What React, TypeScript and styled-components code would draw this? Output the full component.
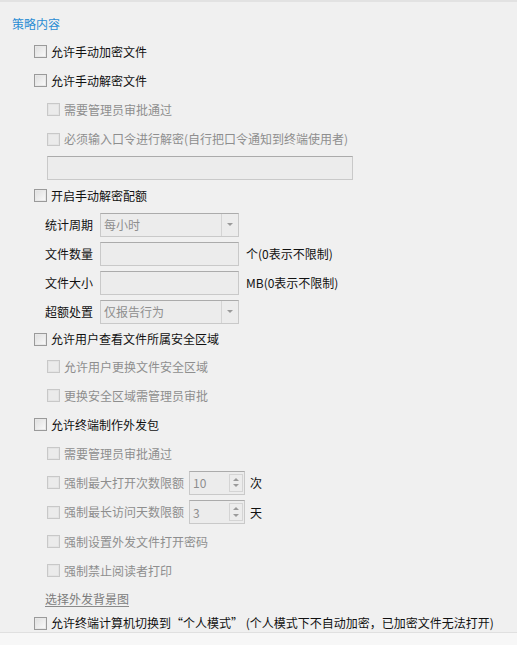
import React from "react";
import styled, { createGlobalStyle } from "styled-components";

const Global = createGlobalStyle`
  html, body { margin: 0; padding: 0; background: #f0f0f0; }
  body { font-family: "Noto Sans CJK SC", "Microsoft YaHei", sans-serif; font-size: 12px; }
`;

const Page = styled.div`
  width: 517px;
  height: 645px;
  box-sizing: border-box;
  background: #f0f0f0;
  border-top: 2px solid #e2e2e2;
  display: flex;
  flex-direction: column;
  overflow: hidden;
`;

const Content = styled.div`
  height: 630px;
  flex-shrink: 0;
  box-sizing: border-box;
  padding-top: 8px;
  display: flex;
  flex-direction: column;
  overflow: hidden;
`;

const Footer = styled.div`
  flex: 1;
  background: #f7f7f7;
  border-top: 1px solid #e0e0e0;
`;

const Title = styled.div`
  height: 27px;
  flex-shrink: 0;
  display: flex;
  align-items: center;
  padding-left: 12px;
  color: #2a8dd4;
  font-size: 12px;
`;

const Row = styled.div<{ $indent: number; $h?: number }>`
  height: ${(p) => p.$h ?? 29}px;
  display: flex;
  align-items: center;
  padding-left: ${(p) => p.$indent}px;
  white-space: nowrap;
  flex-shrink: 0;
`;

const Box = styled.span<{ $disabled?: boolean }>`
  width: 13px;
  height: 13px;
  box-sizing: border-box;
  flex-shrink: 0;
  border: 1px solid ${(p) => (p.$disabled ? "#c8c8c8" : "#9a9a9a")};
  background: ${(p) =>
    p.$disabled
      ? "#ebebeb"
      : "linear-gradient(135deg, #dedede 0%, #f2f2f2 70%, #fbfbfb 100%)"};
  box-shadow: inset 0 0 0 1px ${(p) => (p.$disabled ? "#e4e4e4" : "#e8e8e8")};
  margin-right: 4px;
`;

const Text = styled.span<{ $disabled?: boolean }>`
  color: ${(p) => (p.$disabled ? "#8e8e8e" : "#111")};
  font-size: 12px;
  line-height: 16px;
`;

const Check = ({ label, disabled }: { label: string; disabled?: boolean }) => (
  <>
    <Box $disabled={disabled} />
    <Text $disabled={disabled}>{label}</Text>
  </>
);

const Field = styled.div<{ $w: number }>`
  width: ${(p) => p.$w}px;
  height: 24px;
  box-sizing: border-box;
  border: 1px solid #c9c9c9;
  border-top-color: #ababab;
  background: #ececec;
  display: flex;
  align-items: center;
  flex-shrink: 0;
  color: #8e8e8e;
`;

const FieldText = styled.span`
  flex: 1;
  padding-left: 3px;
  font-size: 12px;
`;

const Arrow = styled.span`
  width: 16px;
  height: 100%;
  border-left: 1px solid #d4d4d4;
  display: flex;
  align-items: center;
  justify-content: center;
`;

const Tri = styled.span`
  width: 0;
  height: 0;
  border-left: 3px solid transparent;
  border-right: 3px solid transparent;
  border-top: 3px solid #9a9a9a;
`;

const Select = ({ value }: { value: string }) => (
  <Field $w={139}>
    <FieldText>{value}</FieldText>
    <Arrow>
      <Tri />
    </Arrow>
  </Field>
);

const SpinCol = styled.span`
  width: 14px;
  height: 18px;
  margin-right: 1px;
  border: 1px solid #d4d4d4;
  box-sizing: border-box;
  display: flex;
  flex-direction: column;
  align-items: center;
  justify-content: space-evenly;
`;

const Up = styled.span`
  width: 0;
  height: 0;
  border-left: 3px solid transparent;
  border-right: 3px solid transparent;
  border-bottom: 3px solid #9a9a9a;
`;

const Down = styled(Up)`
  border-bottom: none;
  border-top: 3px solid #9a9a9a;
`;

const Spin = ({ value }: { value: string }) => (
  <Field $w={56}>
    <FieldText>{value}</FieldText>
    <SpinCol>
      <Up />
      <Down />
    </SpinCol>
  </Field>
);

const Label = styled.span`
  width: 55px;
  flex-shrink: 0;
  color: #111;
`;

const Suffix = styled.span<{ $gap?: number }>`
  margin-left: ${(p) => p.$gap ?? 7}px;
  color: #111;
`;

const Gap = styled.span`
  width: 5px;
  flex-shrink: 0;
`;

const LongInput = styled.div`
  width: 306px;
  height: 24px;
  box-sizing: border-box;
  border: 1px solid #c9c9c9;
  border-top-color: #ababab;
  background: #ececec;
`;

const Link = styled.span`
  color: #7c7c7c;
  text-decoration: underline;
  text-decoration-color: #8a8a8a;
  text-underline-offset: 2px;
`;

export default function App() {
  return (
    <Page>
      <Global />
      <Content>
        <Title>策略内容</Title>
        <Row $indent={34}>
          <Check label="允许手动加密文件" />
        </Row>
        <Row $indent={34}>
          <Check label="允许手动解密文件" />
        </Row>
        <Row $indent={47}>
          <Check label="需要管理员审批通过" disabled />
        </Row>
        <Row $indent={47} $h={30}>
          <Check label="必须输入口令进行解密(自行把口令通知到终端使用者)" disabled />
        </Row>
        <Row $indent={47} $h={27}>
          <LongInput />
        </Row>
        <Row $indent={34}>
          <Check label="开启手动解密配额" />
        </Row>
        <Row $indent={45}>
          <Label>统计周期</Label>
          <Select value="每小时" />
        </Row>
        <Row $indent={45}>
          <Label>文件数量</Label>
          <Field $w={139} />
          <Suffix>个(0表示不限制)</Suffix>
        </Row>
        <Row $indent={45}>
          <Label>文件大小</Label>
          <Field $w={139} />
          <Suffix>MB(0表示不限制)</Suffix>
        </Row>
        <Row $indent={45} $h={29}>
          <Label>超额处置</Label>
          <Select value="仅报告行为" />
        </Row>
        <Row $indent={34} $h={26}>
          <Check label="允许用户查看文件所属安全区域" />
        </Row>
        <Row $indent={47}>
          <Check label="允许用户更换文件安全区域" disabled />
        </Row>
        <Row $indent={47}>
          <Check label="更换安全区域需管理员审批" disabled />
        </Row>
        <Row $indent={34}>
          <Check label="允许终端制作外发包" />
        </Row>
        <Row $indent={47}>
          <Check label="需要管理员审批通过" disabled />
        </Row>
        <Row $indent={47}>
          <Check label="强制最大打开次数限额" disabled />
          <Gap />
          <Spin value="10" />
          <Suffix $gap={5}>次</Suffix>
        </Row>
        <Row $indent={47} $h={30}>
          <Check label="强制最长访问天数限额" disabled />
          <Gap />
          <Spin value="3" />
          <Suffix $gap={5}>天</Suffix>
        </Row>
        <Row $indent={47}>
          <Check label="强制设置外发文件打开密码" disabled />
        </Row>
        <Row $indent={47}>
          <Check label="强制禁止阅读者打印" disabled />
        </Row>
        <Row $indent={45} $h={26}>
          <Link>选择外发背景图</Link>
        </Row>
        <Row $indent={34} $h={24}>
          <Check label="允许终端计算机切换到“个人模式” (个人模式下不自动加密，已加密文件无法打开)" />
        </Row>
      </Content>
      <Footer />
    </Page>
  );
}
